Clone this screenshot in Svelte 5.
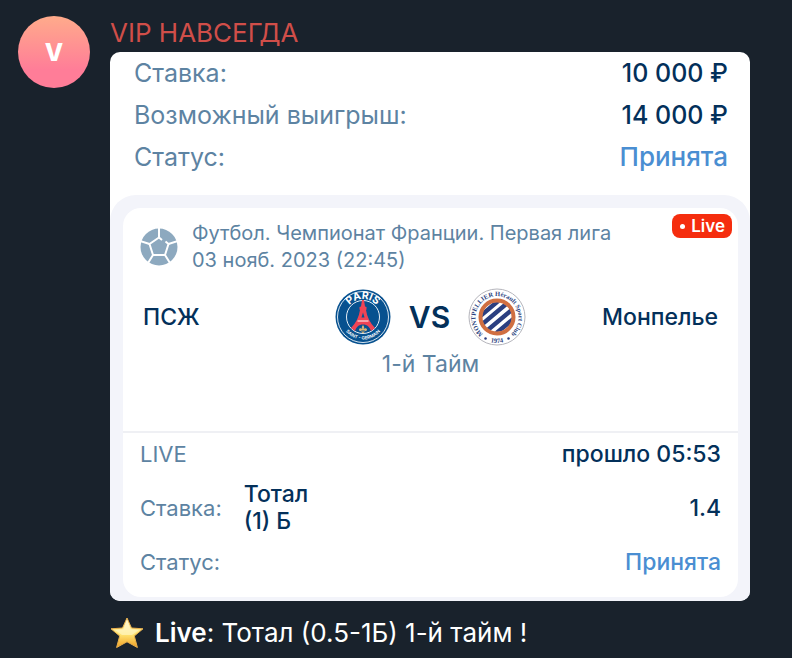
<script lang="ts">
	const summary = [
		{ label: 'Ставка:', value: '10 000 ₽' },
		{ label: 'Возможный выигрыш:', value: '14 000 ₽' },
		{ label: 'Статус:', value: 'Принята', accepted: true }
	];
</script>

<article class="message">
	<div class="avatar">V</div>
	<div class="body">
		<h1>VIP НАВСЕГДА</h1>
		<div class="ticket">
			<dl class="summary">
				{#each summary as row}
					<div class="row">
						<dt>{row.label}</dt>
						<dd class:accepted={row.accepted}>{row.value}</dd>
					</div>
				{/each}
			</dl>

			<div class="panel">
				<section class="card">
					<header>
						<div class="event">
							<svg class="ball" viewBox="0 0 38 38" aria-hidden="true">
								<circle cx="19" cy="19" r="18.5" fill="#8da9bf" />
								<g fill="none" stroke="#fff" stroke-width="2" stroke-linejoin="round">
									<path d="M22 12 19 9.5 9.5 16 13 27H25L28.5 16 25.5 13.5" />
									<path d="M19 0V9.5M9.5 16 0 13M13 27 8 35M25 27 30 35M28.5 16 38 13" />
								</g>
							</svg>
							<p>
								Футбол. Чемпионат Франции. Первая лига<br />
								03 нояб. 2023 (22:45)
							</p>
						</div>
						<span class="badge">Live</span>
					</header>

					<div class="match">
						<span>ПСЖ</span>
						<div class="versus">
							<svg class="psg" viewBox="0 0 112 112" role="img" aria-label="ПСЖ">
								<defs>
									<path id="psg-top" d="M20 56A36 36 0 0 1 92 56" />
									<path id="psg-bottom" d="M11 56A45 45 0 0 0 101 56" />
								</defs>
								<circle cx="56" cy="56" r="55" fill="#07518f" />
								<circle cx="56" cy="56" r="51" fill="none" stroke="#d6e4ef" stroke-width="2" />
								<circle cx="56" cy="56" r="33" fill="#07518f" stroke="#e6eef5" stroke-width="2" />
								<path
									d="M54 22h4l2 13 3 1v5l-1 1c2 14 8 26 18 36l-8 6c-3-8-7-13-16-13s-13 5-16 13l-8-6c10-10 16-22 18-36l-1-1v-5l3-1z"
									fill="#f04455"
								/>
								<path d="M45 64h22" stroke="#fff" stroke-width="2" />
								<path d="M56 47l-3 10h6z" fill="#07518f" />
								<path
									d="M56 72c-3 4-3 6-1 8-3-2-6-2-7 1 0 3 3 4 5 2h6c2 2 5 1 5-2-1-3-4-3-7-1 2-2 2-4-1-8zm-4 13h8l-4 4z"
									fill="#d8b477"
								/>
								<text class="psg-name"><textPath href="#psg-top" startOffset="50%">PARIS</textPath></text>
								<text class="psg-sub"><textPath href="#psg-bottom" startOffset="50%">SAINT - GERMAIN</textPath></text>
							</svg>
							<strong>VS</strong>
							<svg class="mhsc" viewBox="0 0 116 116" role="img" aria-label="Монпелье">
								<defs>
									<path id="mhsc-ring" d="M29 91A43 43 0 1 1 87 91" />
									<path id="mhsc-base" d="M6 58A52 52 0 0 0 110 58" />
									<clipPath id="mhsc-core"><circle cx="58" cy="58" r="30" /></clipPath>
								</defs>
								<circle cx="58" cy="58" r="56" fill="#fff" stroke="#b5b5bc" stroke-width="2" />
								<g clip-path="url(#mhsc-core)">
									<path
										d="M18 35H98M18 50H98M18 66H98M18 82H98"
										stroke="#2b3f80"
										stroke-width="9"
										transform="rotate(-40 58 58)"
									/>
								</g>
								<circle cx="58" cy="58" r="33" fill="none" stroke="#d06f42" stroke-width="8" />
								<text class="mhsc-name"><textPath href="#mhsc-ring" startOffset="50%">MONTPELLIER Hérault Sport Club</textPath></text>
								<text class="mhsc-year"><textPath href="#mhsc-base" startOffset="50%">1974</textPath></text>
								<circle cx="35" cy="101" r="2.5" fill="#2b3f80" />
								<circle cx="81" cy="101" r="2.5" fill="#2b3f80" />
							</svg>
						</div>
						<span class="away">Монпелье</span>
					</div>
					<p class="period">1-й Тайм</p>

					<dl class="bet">
						<div class="row">
							<dt>LIVE</dt>
							<dd>прошло 05:53</dd>
						</div>
						<div class="row">
							<dt>Ставка:</dt>
							<dd class="pick">Тотал<br />(1) Б</dd>
							<dd>1.4</dd>
						</div>
						<div class="row">
							<dt>Статус:</dt>
							<dd class="accepted">Принята</dd>
						</div>
					</dl>
				</section>
			</div>
		</div>

		<p class="caption">
			<svg class="star" viewBox="0 0 34 32" aria-hidden="true">
				<defs>
					<linearGradient id="gold" x1="0" y1="0" x2="0" y2="1">
						<stop offset="0" stop-color="#fff6c4" />
						<stop offset="0.55" stop-color="#ffe574" />
						<stop offset="1" stop-color="#f0a024" />
					</linearGradient>
				</defs>
				<path
					d="M17 1 21.5 11 33 11.8 24.3 19 27.4 30.5 17 24.8 6.6 30.5 9.7 19 1 11.8 12.5 11Z"
					fill="url(#gold)"
					stroke="#e9b04c"
					stroke-width="1"
					stroke-linejoin="round"
				/>
				<path d="M17 3 20.5 12.3 29 13 22 18H12L5 13 13.5 12.3Z" fill="#fffbe2" opacity="0.5" />
			</svg>
			<span><b>Live</b>: Тотал (0.5-1Б) 1-й тайм !</span>
		</p>
	</div>
</article>

<style>
	:global(body) {
		margin: 0;
		background: #19222c;
	}

	h1,
	p,
	dl,
	dd {
		margin: 0;
	}

	.message {
		display: flex;
		gap: 20px;
		padding: 16px 42px 6px 18px;
		font-family: Inter, 'Liberation Sans', sans-serif;
	}

	.avatar {
		display: flex;
		flex: none;
		align-items: center;
		justify-content: center;
		width: 72px;
		height: 72px;
		border-radius: 50%;
		background: linear-gradient(#ffab8b, #ff7d98 75%);
		color: #fff;
		font-size: 24px;
		font-weight: 800;
	}

	.body {
		flex: 1;
		min-width: 0;
	}

	h1 {
		margin-bottom: 2px;
		color: #d04e49;
		font-size: 26px;
		font-weight: 400;
		line-height: 34px;
	}

	.ticket {
		overflow: hidden;
		border-radius: 10px;
		background: #fff;
		color: #03305a;
	}

	.row {
		display: flex;
		align-items: center;
		justify-content: space-between;
	}

	dt {
		color: #5d83a2;
	}

	dd {
		font-weight: 500;
	}

	.accepted {
		color: #4a8ed2;
	}

	.summary {
		padding: 0 22px 0 24px;
		font-size: 25px;
		line-height: 42px;
	}

	.summary .accepted {
		font-size: 26px;
	}

	.panel {
		margin-top: 17px;
		padding: 13px 12px 4px 13px;
		border-radius: 26px 26px 0 0;
		background: #f3f4fa;
	}

	.card {
		border-radius: 18px;
		background: #fff;
	}

	header {
		display: flex;
		align-items: flex-start;
		justify-content: space-between;
		padding: 6px 6px 0 17px;
	}

	.event {
		display: flex;
		align-items: center;
		gap: 14px;
		padding-top: 6px;
		color: #5d83a2;
		font-size: 20px;
		line-height: 27px;
	}

	.ball {
		flex: none;
		width: 38px;
		height: 38px;
	}

	.badge {
		display: flex;
		align-items: center;
		gap: 6px;
		padding: 0 7px 0 8px;
		border-radius: 8px;
		background: #f52d0e;
		color: #fff;
		font-size: 17px;
		font-weight: 600;
		line-height: 24px;
	}

	.badge::before {
		content: '';
		width: 5px;
		height: 5px;
		border-radius: 50%;
		background: #fff;
	}

	.match {
		display: grid;
		grid-template-columns: 1fr auto 1fr;
		align-items: center;
		margin-top: 14px;
		padding: 0 20px;
		font-size: 23px;
		font-weight: 500;
	}

	.away {
		text-align: right;
	}

	.versus {
		display: flex;
		align-items: center;
		gap: 18px;
	}

	.versus strong {
		font-size: 30px;
		font-weight: 600;
	}

	.psg {
		width: 56px;
		height: 56px;
	}

	.mhsc {
		width: 58px;
		height: 58px;
	}

	.psg text {
		fill: #fff;
		text-anchor: middle;
	}

	.psg-name {
		font-size: 21px;
		font-weight: 700;
	}

	.psg-sub {
		font-size: 9px;
		font-weight: 600;
	}

	.mhsc text {
		fill: #2b3f80;
		font-family: 'Liberation Serif', serif;
		font-weight: 700;
		text-anchor: middle;
	}

	.mhsc-name {
		font-size: 13px;
	}

	.mhsc-year {
		font-size: 13px;
	}

	.period {
		margin-top: 4px;
		color: #5d83a2;
		font-size: 23px;
		line-height: 28px;
		text-align: center;
	}

	.bet {
		display: flex;
		flex-direction: column;
		gap: 6px;
		margin-top: 53px;
		padding: 0 17px 14px;
		border-top: 2px solid #eff0f4;
		font-size: 22px;
		line-height: 42px;
	}

	.bet dd {
		font-size: 23px;
	}

	.bet .pick {
		flex: 1;
		padding-left: 22px;
		line-height: 27px;
	}

	.caption {
		display: flex;
		align-items: center;
		gap: 11px;
		margin-top: 15px;
		color: #fff;
		font-size: 26px;
		line-height: 34px;
	}

	.caption b {
		font-weight: 600;
	}

	.star {
		flex: none;
		width: 34px;
		height: 32px;
	}
</style>
